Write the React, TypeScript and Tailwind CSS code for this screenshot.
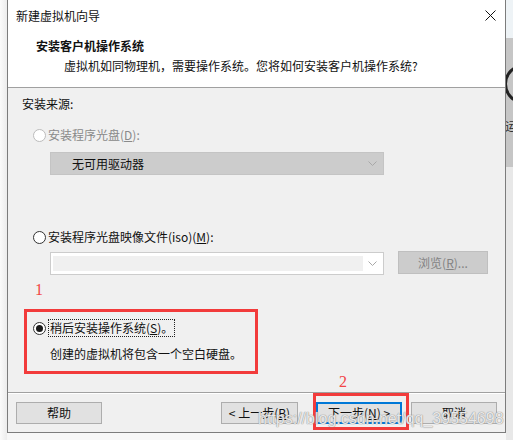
import React from 'react';

const font = "font-['Noto_Sans_CJK_SC','Microsoft_YaHei',sans-serif]";

const Radio = ({ checked, disabled }: { checked?: boolean; disabled?: boolean }) => (
  <span
    className={`flex h-[13px] w-[13px] shrink-0 items-center justify-center rounded-full border bg-white ${
      disabled ? 'border-[#bcbcbc]' : 'border-[#333333]'
    }`}
  >
    {checked && <span className="h-[7px] w-[7px] rounded-full bg-[#1a1a1a]" />}
  </span>
);

const Chevron = () => (
  <svg width="9" height="5" viewBox="0 0 9 5" className="shrink-0">
    <path d="M0.5 0.5 L4.5 4.5 L8.5 0.5" fill="none" stroke="#a8a8a8" strokeWidth="1" />
  </svg>
);

const Btn = ({ children, w, primary }: { children: React.ReactNode; w: string; primary?: boolean }) => (
  <div
    className={`flex h-[22px] ${w} items-center justify-center bg-[#e1e1e1] text-[12px] leading-none text-[#111] ${
      primary ? 'border-2 border-[#0078d7]' : 'border border-[#adadad]'
    }`}
  >
    {children}
  </div>
);

export default function App() {
  return (
    <div className={`relative flex h-[440px] w-[513px] overflow-hidden bg-[#f7f7f7] ${font}`}>
      <div className="w-[7px] shrink-0 bg-gradient-to-r from-[#fbfbfb] to-[#ececec]" />

      <div className="flex h-[433px] w-[499px] shrink-0 flex-col border-x border-b border-[#7c7c7c] bg-white text-[12px] text-[#111]">
        {/* title bar */}
        <div className="flex h-[31px] items-center justify-between pl-[8px] pr-[9px] leading-[18px]">
          <span>新建虚拟机向导</span>
          <svg width="11" height="11" viewBox="0 0 11 11">
            <path d="M0.5 0.5 L10.5 10.5 M10.5 0.5 L0.5 10.5" stroke="#111" strokeWidth="1" />
          </svg>
        </div>

        {/* header */}
        <div className="h-[57px] border-b border-[#a0a0a0] pl-[28px] pt-[6px] leading-[18px]">
          <div className="font-bold">安装客户机操作系统</div>
          <div className="mt-[2px] pl-[28px]">虚拟机如同物理机，需要操作系统。您将如何安装客户机操作系统?</div>
        </div>

        {/* body */}
        <div className="h-[304px] bg-[#f0f0f0] leading-[18px]">
          <div className="ml-[14px] mt-[7px] h-[18px]">安装来源:</div>

          <div className="ml-[25px] mt-[13px] flex h-[18px] items-center gap-[2px] text-[#8a8a8a]">
            <Radio disabled />
            <span>
              安装程序光盘(<span className="underline">D</span>):
            </span>
          </div>

          <div className="ml-[42px] mt-[8px] flex h-[23px] w-[334px] items-center justify-between border border-[#c4c4c4] bg-[#cccccc] pl-[21px] pr-[6px]">
            <span>无可用驱动器</span>
            <Chevron />
          </div>

          <div className="ml-[25px] mt-[53px] flex h-[18px] items-center gap-[2px]">
            <Radio />
            <span>
              安装程序光盘映像文件(iso)(<span className="underline">M</span>):
            </span>
          </div>

          <div className="ml-[42px] mt-[5px] flex h-[24px] items-start">
            <div className="mt-[1px] flex h-[23px] w-[334px] items-center border border-[#cccccc] bg-white p-[2px] pr-[6px]">
              <div className="h-[15px] w-[310px] bg-[#f0f0f0]" />
              <span className="ml-auto">
                <Chevron />
              </span>
            </div>
            <div className="ml-[14px] flex h-[23px] w-[90px] items-center justify-center border border-[#bfbfbf] bg-[#cccccc] text-[#838383]">
              浏览(<span className="underline">R</span>)...
            </div>
          </div>

          <div className="ml-[27px] mt-[7px] h-[16px] font-['Liberation_Serif',serif] text-[16px] leading-[16px] text-[#f24545]">1</div>

          <div className="ml-[16px] mt-[11px] h-[65px] w-[234px] border-[3px] border-[#f23b3b]">
            <div className="ml-[6px] mt-[7px] flex h-[18px] items-center gap-[2px]">
              <Radio checked />
              <span className="border border-dotted border-[#222] px-[1px] leading-[16px]">
                稍后安装操作系统(<span className="underline">S</span>)。
              </span>
            </div>
            <div className="ml-[23px] mt-[8px] h-[18px]">创建的虚拟机将包含一个空白硬盘。</div>
          </div>
        </div>

        <div className="h-px bg-[#a0a0a0]" />
        <div className="h-px bg-white" />

        {/* footer */}
        <div className="flex h-[38px] items-start bg-[#f0f0f0] px-[8px] pt-[8px]">
          <Btn w="w-[86px]">帮助</Btn>
          <div className="flex-1" />
          <Btn w="w-[77px]">
            &lt; 上一步(<span className="underline">B</span>)
          </Btn>
          <div className="w-[18px]" />
          <Btn w="w-[86px]" primary>
            下一步(<span className="underline">N</span>) &gt;
          </Btn>
          <div className="w-[9px]" />
          <Btn w="w-[86px]">取消</Btn>
        </div>
      </div>

      {/* background strip on the right */}
      <div className="flex w-[7px] shrink-0 flex-col">
        <div className="h-[38px] bg-[#eef3f6]" />
        <div className="relative h-[129px] overflow-hidden bg-[#c6c6c6]">
          <div className="absolute left-[-2px] top-[26px] h-[40px] w-[40px] rounded-full border-[3px] border-[#222]" />
          <span className="absolute left-[-1px] top-[82px] text-[12px] leading-none text-[#333]">运</span>
        </div>
        <div className="flex-1 bg-[#e8e8e8]" />
      </div>

      {/* annotation: step 2 */}
      <div className="absolute left-[339px] top-[374px] font-['Liberation_Serif',serif] text-[16px] leading-[16px] text-[#f24545]">2</div>
      <div className="absolute left-[313px] top-[393px] h-[37px] w-[96px] border-[3px] border-[#f23b3b]" />

      {/* watermark */}
      <div className="absolute left-[258px] top-[410px] font-['Liberation_Sans',sans-serif] text-[16px] leading-[18px] text-white/80 [text-shadow:0_0_1px_#8a8a8a,0_0_1px_#8a8a8a]">
        https://blog.csdn.net/qq_39554698
      </div>
    </div>
  );
}
